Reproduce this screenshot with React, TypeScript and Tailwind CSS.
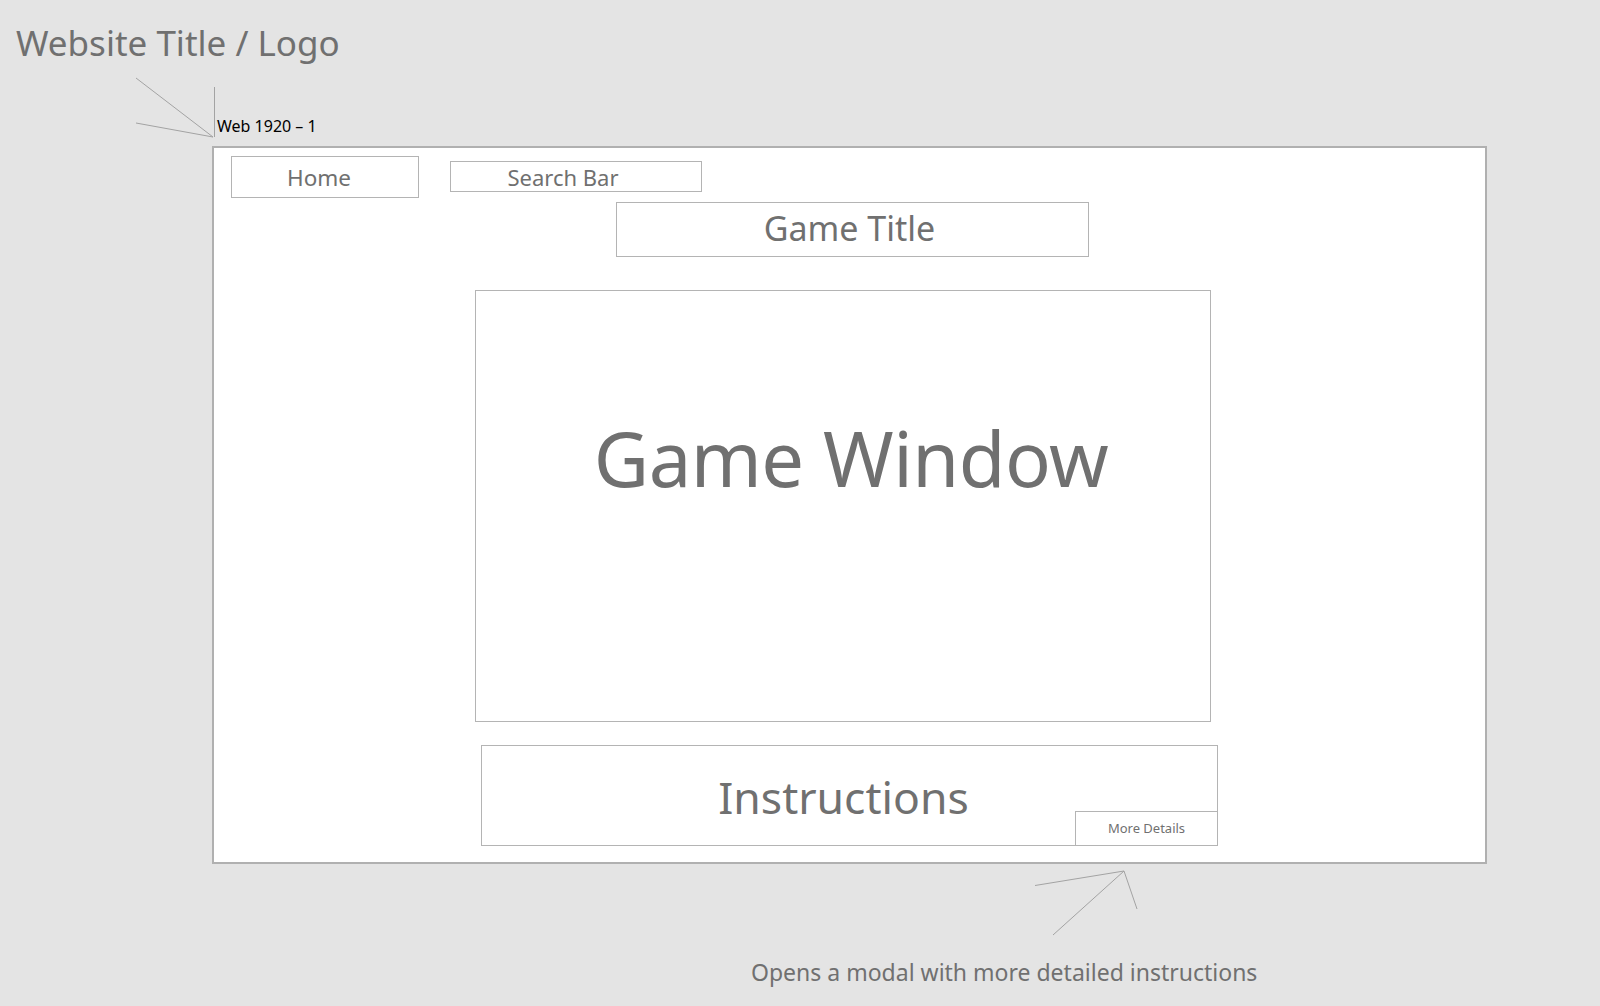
import React from "react";

const font = { fontFamily: '"Noto Sans", "Open Sans", sans-serif' };

function Box({ className, children }: { className: string; children?: React.ReactNode }) {
  return <div className={`border border-[#b4b4b4] bg-white text-[#707070] ${className}`}>{children}</div>;
}

function Callouts() {
  return (
    <svg className="pointer-events-none absolute inset-0" width="1600" height="1006">
      <g stroke="#a3a3a3" strokeWidth="1" fill="none">
        <line x1="136" y1="78" x2="213" y2="137" />
        <line x1="214.5" y1="87" x2="214.5" y2="137" />
        <line x1="136" y1="123" x2="213" y2="137" />
        <line x1="1035" y1="885.5" x2="1124" y2="871" />
        <line x1="1124" y1="871" x2="1053" y2="935" />
        <line x1="1124" y1="871" x2="1137" y2="909" />
      </g>
    </svg>
  );
}

export default function App() {
  return (
    <div className="relative h-[1006px] w-[1600px] overflow-hidden bg-[#e4e4e4]" style={font}>
      <h1 className="pl-[16px] pt-[23px] text-[35px] leading-[40px] text-[#707070]">Website Title / Logo</h1>
      <div className="ml-[217px] mt-[53px] text-[16px] leading-[20px] text-black">Web 1920 – 1</div>

      <div className="ml-[212px] mt-[10px] flex h-[718px] w-[1275px] flex-col border-2 border-[#b0b0b0] bg-white">
        <div className="flex items-start">
          <Box className="ml-[17px] mt-[8px] flex h-[42px] w-[188px] items-center justify-center pr-[12px] pt-[2px] text-[22.5px]">
            Home
          </Box>
          <Box className="ml-[31px] mt-[13px] flex h-[31px] w-[252px] items-center justify-center pr-[26px] pt-px text-[22px]">
            Search Bar
          </Box>
        </div>

        <Box className="ml-[402px] mt-[4px] flex h-[55px] w-[473px] items-center justify-center pb-[3px] pr-[6px] text-[34px] leading-none">
          Game Title
        </Box>

        <Box className="ml-[261px] mt-[33px] flex h-[432px] w-[736px] justify-center pl-[16px] pt-[129px] text-[76px] leading-none tracking-[-0.5px]">
          Game Window
        </Box>

        <Box className="relative ml-[267px] mt-[23px] flex h-[101px] w-[737px] justify-center pl-px pr-[13px] pt-[29px] text-[44.5px] leading-none">
          Instructions
          <div className="absolute -bottom-px -right-px flex h-[35px] w-[143px] items-center justify-center border border-[#b4b4b4] bg-white text-[13px]">
            More Details
          </div>
        </Box>
      </div>

      <p className="ml-[751px] mt-[94px] text-[23px] leading-[28px] text-[#707070]">
        Opens a modal with more detailed instructions
      </p>

      <Callouts />
    </div>
  );
}
